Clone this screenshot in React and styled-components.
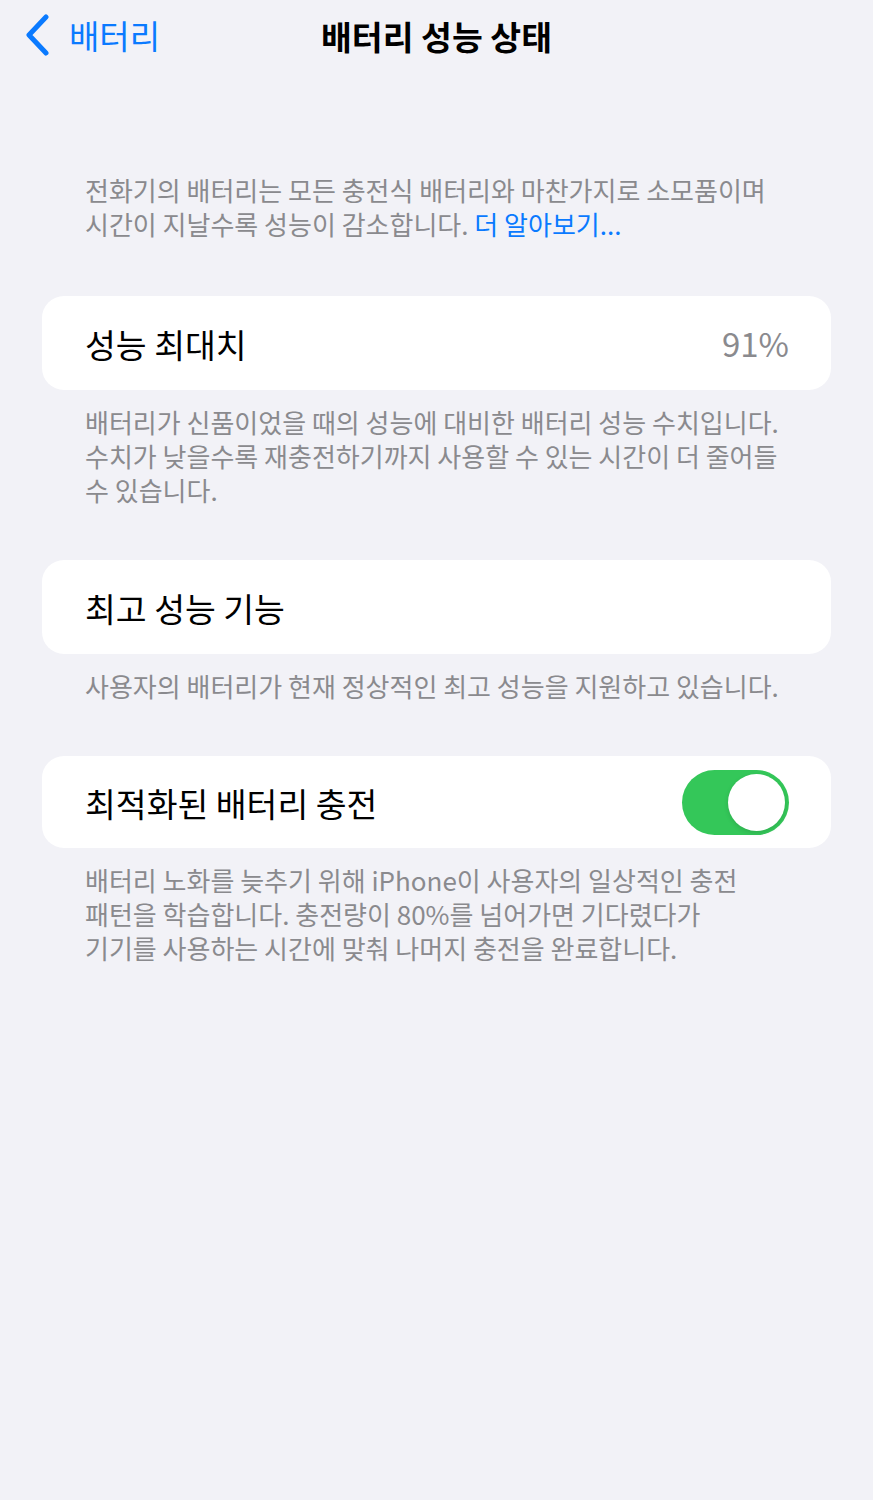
import React from 'react';
import styled, { createGlobalStyle } from 'styled-components';

const GlobalStyle = createGlobalStyle`
  html, body {
    margin: 0;
    padding: 0;
    background: #f2f2f7;
  }
  body {
    font-family: "Noto Sans CJK KR", "Noto Sans", sans-serif;
    -webkit-font-smoothing: antialiased;
  }
`;

const Page = styled.div`
  min-height: 1500px;
  background: #f2f2f7;
  padding-bottom: 40px;
`;

const NavBar = styled.header`
  display: grid;
  grid-template-columns: 1fr auto 1fr;
  align-items: center;
  height: 70px;
`;

const BackButton = styled.button`
  display: flex;
  align-items: center;
  gap: 18px;
  padding: 0 0 0 25px;
  border: none;
  background: none;
  color: #0a7aff;
  font-family: inherit;
  font-size: 33px;
  line-height: 1;
  cursor: pointer;
  justify-self: start;
`;

const Title = styled.h1`
  margin: 0;
  font-size: 33.5px;
  font-weight: 700;
  color: #000;
`;

const Note = styled.p`
  margin: ${(p) => p.$top || 0}px 0 0;
  padding: 0 85px;
  font-size: 26px;
  line-height: 34px;
  color: #8a8a8e;
  white-space: nowrap;
`;

const MoreLink = styled.a`
  color: #0a7aff;
  text-decoration: none;
`;

const Card = styled.div`
  display: flex;
  align-items: center;
  justify-content: space-between;
  margin: ${(p) => p.$top}px 42px 0;
  height: ${(p) => p.$height || 94}px;
  padding: 0 42px 0 43px;
  background: #fff;
  border-radius: 22px;
`;

const Label = styled.span`
  font-size: 33.5px;
  color: #000;
`;

const Value = styled.span`
  font-size: 33px;
  color: #8a8a8e;
`;

const Toggle = styled.div`
  position: relative;
  width: 107px;
  height: 65px;
  border-radius: 33px;
  background: #34c759;
`;

const Knob = styled.div`
  position: absolute;
  top: 4px;
  right: 4px;
  width: 57px;
  height: 57px;
  border-radius: 50%;
  background: #fff;
  box-shadow: 0 2px 5px rgba(0, 0, 0, 0.12);
`;

function Chevron() {
  return (
    <svg width="26" height="42" viewBox="0 0 26 42" fill="none">
      <path
        d="M21 3 L4 21 L21 39"
        stroke="#0a7aff"
        strokeWidth="5"
        strokeLinecap="round"
        strokeLinejoin="round"
      />
    </svg>
  );
}

function App() {
  return (
    <Page>
      <GlobalStyle />
      <NavBar>
        <BackButton>
          <Chevron />
          배터리
        </BackButton>
        <Title>배터리 성능 상태</Title>
        <div />
      </NavBar>

      <Note $top={103}>
        전화기의 배터리는 모든 충전식 배터리와 마찬가지로 소모품이며
        <br />
        시간이 지날수록 성능이 감소합니다. <MoreLink href="#">더 알아보기...</MoreLink>
      </Note>

      <Card $top={55}>
        <Label>성능 최대치</Label>
        <Value>91%</Value>
      </Card>
      <Note $top={15}>
        배터리가 신품이었을 때의 성능에 대비한 배터리 성능 수치입니다.
        <br />
        수치가 낮을수록 재충전하기까지 사용할 수 있는 시간이 더 줄어들
        <br />수 있습니다.
      </Note>

      <Card $top={53}>
        <Label>최고 성능 기능</Label>
      </Card>
      <Note $top={15}>사용자의 배터리가 현재 정상적인 최고 성능을 지원하고 있습니다.</Note>

      <Card $top={53} $height={92}>
        <Label>최적화된 배터리 충전</Label>
        <Toggle>
          <Knob />
        </Toggle>
      </Card>
      <Note $top={15}>
        배터리 노화를 늦추기 위해 iPhone이 사용자의 일상적인 충전
        <br />
        패턴을 학습합니다. 충전량이 80%를 넘어가면 기다렸다가
        <br />
        기기를 사용하는 시간에 맞춰 나머지 충전을 완료합니다.
      </Note>
    </Page>
  );
}

export default App;
